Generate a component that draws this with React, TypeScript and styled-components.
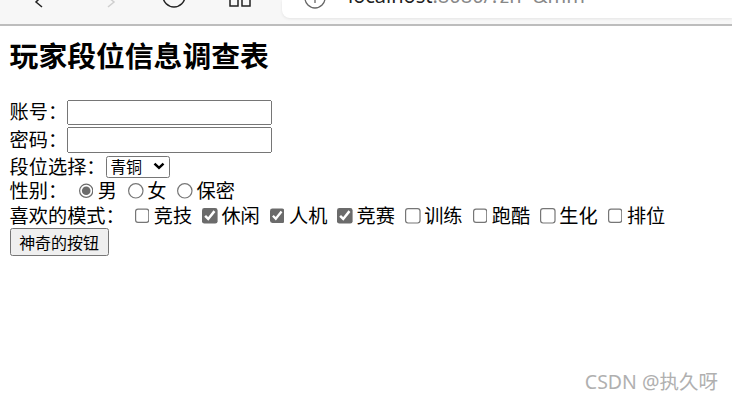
import styled, { createGlobalStyle } from "styled-components";

const GlobalStyle = createGlobalStyle`
  html, body {
    margin: 0;
    padding: 0;
    background: #fff;
  }
`;

const modes = [
  { name: "竞技", checked: false },
  { name: "休闲", checked: true },
  { name: "人机", checked: true },
  { name: "竞赛", checked: true },
  { name: "训练", checked: false },
  { name: "跑酷", checked: false },
  { name: "生化", checked: false },
  { name: "排位", checked: false },
];

const chevron = encodeURIComponent(
  '<svg xmlns="http://www.w3.org/2000/svg" width="12" height="8" viewBox="0 0 12 8"><path d="M1.5 1.5 L6 6 L10.5 1.5" stroke="#000" stroke-width="2.4" fill="none"/></svg>'
);

const App = () => {
  return (
    <Screen>
      <GlobalStyle />
      <BrowserBar>
        <NavIcon width="10" height="10" viewBox="0 0 10 10" $left={34}>
          <path d="M8 -4 L2 2 L8 7" stroke="#222" strokeWidth="1.5" fill="none" />
        </NavIcon>
        <NavIcon width="10" height="10" viewBox="0 0 10 10" $left={62}>
          <path d="M2 -3 L8 2 L2 7" stroke="#cfcfcf" strokeWidth="1.5" fill="none" />
        </NavIcon>
        <NavIcon width="24" height="12" viewBox="0 0 24 12" $left={46}>
          <circle cx="12" cy="-4" r="11" stroke="#222" strokeWidth="1.5" fill="none" />
        </NavIcon>
        <NavIcon width="22" height="12" viewBox="0 0 22 12" $left={43}>
          <path d="M1 0 V6 H9 V0 M13 0 V6 H21 V0" stroke="#222" strokeWidth="1.5" fill="none" />
        </NavIcon>
        <AddressBar>
          <InfoIcon width="22" height="10" viewBox="0 0 22 10">
            <circle cx="11" cy="-2" r="10" stroke="#666" strokeWidth="1.3" fill="none" />
            <path d="M11 0 V3" stroke="#666" strokeWidth="1.3" />
          </InfoIcon>
          <Url>
            localhost<UrlRest>:8080/?zh=&amp;mm</UrlRest>
          </Url>
        </AddressBar>
      </BrowserBar>
      <Page>
        <Title>玩家段位信息调查表</Title>
        <Row $height={22.5}>
          <FieldLabel>账号：</FieldLabel>
          <TextBox type="text" />
        </Row>
        <Row $height={24}>
          <FieldLabel>密码：</FieldLabel>
          <TextBox type="password" />
        </Row>
        <Row $height={20.5}>
          <FieldLabel>段位选择：</FieldLabel>
          <RankSelect defaultValue="青铜">
            <option>青铜</option>
            <option>白银</option>
            <option>黄金</option>
          </RankSelect>
        </Row>
        <Row $height={20.5}>
          <GenderLabel>性别：</GenderLabel>
          <Choice $gap={9.2}>
            <input type="radio" name="sex" defaultChecked />男
          </Choice>
          <Choice $gap={9.2}>
            <input type="radio" name="sex" />女
          </Choice>
          <Choice $gap={9.2}>
            <input type="radio" name="sex" />保密
          </Choice>
        </Row>
        <Row $height={20.5}>
          <ModeLabel>喜欢的模式：</ModeLabel>
          {modes.map((mode) => (
            <Choice key={mode.name} $gap={8.35}>
              <input type="checkbox" defaultChecked={mode.checked} />
              {mode.name}
            </Choice>
          ))}
        </Row>
        <MagicButton type="button">神奇的按钮</MagicButton>
      </Page>
      <Watermark>CSDN @执久呀</Watermark>
    </Screen>
  );
};

const Screen = styled.div`
  position: relative;
  width: 732px;
  height: 400px;
  overflow: hidden;
  background: #fff;
  font-family: "Noto Sans CJK SC", "Liberation Sans", sans-serif;
  color: #000;
`;

const BrowserBar = styled.div`
  display: flex;
  align-items: flex-start;
  height: 24px;
  background: #f7f7f7;
  border-bottom: 2px solid #bdbdbd;
  overflow: hidden;
`;

const NavIcon = styled.svg<{ $left: number }>`
  flex-shrink: 0;
  margin-left: ${(p) => p.$left}px;
  overflow: visible;
`;

const AddressBar = styled.div`
  display: flex;
  align-items: flex-end;
  flex: 1;
  height: 18px;
  margin-left: 31px;
  padding-left: 22px;
  padding-bottom: 12px;
  box-sizing: border-box;
  background: #fff;
  border-bottom-left-radius: 8px;
  box-shadow: 0 1px 3px rgba(0, 0, 0, 0.08);
`;

const InfoIcon = styled.svg`
  flex-shrink: 0;
  align-self: flex-start;
  overflow: visible;
`;

const Url = styled.div`
  margin-left: 22px;
  font-family: "Noto Sans", "Liberation Sans", sans-serif;
  font-size: 20px;
  line-height: 20px;
  color: #222;
  white-space: nowrap;
`;

const UrlRest = styled.span`
  color: #888;
`;

const Page = styled.div`
  zoom: 1.2;
  padding: 0 8px;
  font-size: 16px;
  line-height: 20px;
`;

const Title = styled.h2`
  margin: 0 0 20.5px;
  padding-top: 8px;
  font-size: 24px;
  line-height: 32px;
  font-weight: 700;
`;

const Row = styled.div<{ $height: number }>`
  display: flex;
  align-items: center;
  height: ${(p) => p.$height}px;
  white-space: nowrap;
  accent-color: #6b6b6b;
`;

const FieldLabel = styled.label`
  flex-shrink: 0;
  padding-bottom: 2px;
`;

const GenderLabel = styled(FieldLabel)`
  margin-right: 9.5px;
`;

const ModeLabel = styled(FieldLabel)`
  margin-right: 8.3px;
`;

const TextBox = styled.input`
  width: 170.8px;
  height: 21px;
  box-sizing: border-box;
  margin: 0;
  font-family: "Liberation Sans", sans-serif;
`;

const RankSelect = styled.select`
  appearance: none;
  width: 53.5px;
  height: 18.5px;
  box-sizing: border-box;
  margin: 0;
  padding: 0 0 0 3px;
  border: 1px solid #767676;
  border-radius: 2px;
  background: #fff url("data:image/svg+xml,${chevron}") no-repeat right 3px center / 10px 7px;
  font-family: "Noto Sans CJK SC", sans-serif;
  font-size: 13.33px;
  line-height: 16px;
  color: #000;
`;

const Choice = styled.label<{ $gap: number }>`
  display: inline-flex;
  align-items: center;
  margin-right: ${(p) => p.$gap}px;
  padding-bottom: 2px;

  & input {
    flex-shrink: 0;
    margin: 2px 3px 0 0;
  }
`;

const MagicButton = styled.button`
  display: block;
  width: 82.5px;
  height: 23.3px;
  padding: 0;
  font-family: "Noto Sans CJK SC", sans-serif;
  font-size: 13.33px;
  line-height: 17px;
`;

const Watermark = styled.div`
  position: absolute;
  right: 14px;
  bottom: 6px;
  font-family: "Noto Sans", "Noto Sans CJK SC", sans-serif;
  font-size: 19.5px;
  line-height: 24px;
  color: #b0b0b0;
`;

export default App;
